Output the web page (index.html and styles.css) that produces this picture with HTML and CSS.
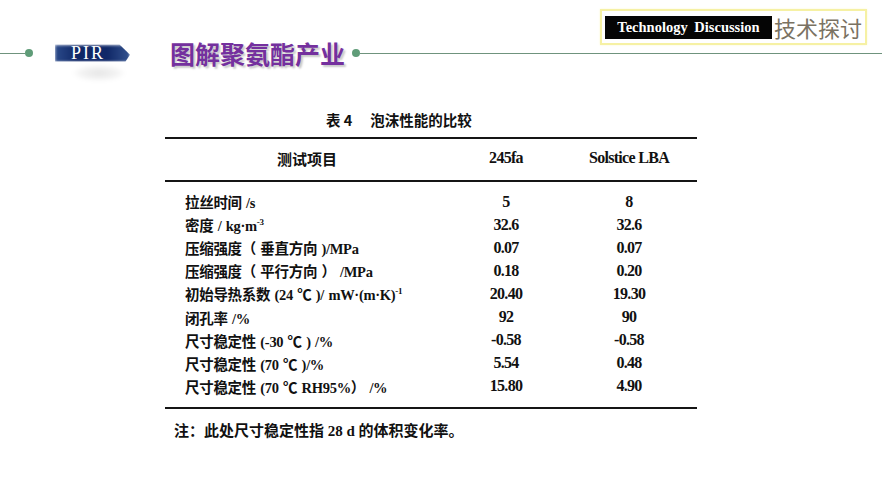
FILE: index.html
```html
<!DOCTYPE html>
<html lang="zh">
<head>
<meta charset="utf-8">
<title>图解聚氨酯产业</title>
<link rel="stylesheet" href="styles.css">
</head>
<body>
<div class="page">
  <div class="topbar">
    <div class="tag">
      <div class="tag-en">Technology Discussion</div>
      <div class="tag-cn">技术探讨</div>
    </div>
  </div>
  <div class="headrow">
    <div class="line short"></div>
    <div class="dot"></div>
    <div class="badge"><span class="badge-text">PIR</span></div>
    <div class="title">图解聚氨酯产业</div>
    <div class="dot"></div>
    <div class="line grow"></div>
  </div>

  <div class="figure">
    <div class="caption">表 4<span class="cap-gap">泡沫性能的比较</span></div>
    <div class="thead">
      <div class="cell head-label">测试项目</div>
      <div class="cell num head-num">245fa</div>
      <div class="cell num head-num">Solstice LBA</div>
      <div></div>
    </div>
    <div class="tbody">
      <div class="cell label">拉丝时间 /s</div><div class="cell num">5</div><div class="cell num">8</div><div></div>
      <div class="cell label">密度 / kg·m<sup>-3</sup></div><div class="cell num">32.6</div><div class="cell num">32.6</div><div></div>
      <div class="cell label">压缩强度（ 垂直方向 )/MPa</div><div class="cell num">0.07</div><div class="cell num">0.07</div><div></div>
      <div class="cell label">压缩强度（ 平行方向 ） /MPa</div><div class="cell num">0.18</div><div class="cell num">0.20</div><div></div>
      <div class="cell label">初始导热系数 (24 ℃ )/ mW·(m·K)<sup>-1</sup></div><div class="cell num">20.40</div><div class="cell num">19.30</div><div></div>
      <div class="cell label">闭孔率 /%</div><div class="cell num">92</div><div class="cell num">90</div><div></div>
      <div class="cell label">尺寸稳定性 (-30 ℃ ) /%</div><div class="cell num">-0.58</div><div class="cell num">-0.58</div><div></div>
      <div class="cell label">尺寸稳定性 (70 ℃ )/%</div><div class="cell num">5.54</div><div class="cell num">0.48</div><div></div>
      <div class="cell label">尺寸稳定性 (70 ℃ RH95%） /%</div><div class="cell num">15.80</div><div class="cell num">4.90</div><div></div>
    </div>
    <div class="note">注：此处尺寸稳定性指 28 d 的体积变化率。</div>
  </div>
</div>
</body>
</html>
```

FILE: styles.css
```css
html, body {
  margin: 0;
  padding: 0;
  background: #ffffff;
}

.page {
  width: 882px;
  height: 495px;
  overflow: hidden;
  position: relative;
  background: #ffffff;
}

/* top right tag */
.topbar {
  display: flex;
  justify-content: flex-end;
  padding: 9px 15px 0 0;
  margin-bottom: -7px;
}

.tag {
  display: flex;
  align-items: center;
  gap: 2px;
  height: 28px;
  padding: 2px 3px 2px 3px;
  border: 2px solid #f6f1a4;
  box-shadow: 0 0 2px #fbf8cf;
  background: #ffffff;
}

.tag-en {
  width: 167px;
  height: 23px;
  background: #050505;
  color: #ffffff;
  font-family: "Liberation Serif", serif;
  font-weight: bold;
  font-size: 14.5px;
  word-spacing: 3px;
  display: flex;
  align-items: center;
  justify-content: center;
}

.tag-cn {
  font-family: "Noto Sans CJK SC", sans-serif;
  font-size: 22px;
  line-height: 28px;
  color: #7a7262;
}

/* header row with line */
.headrow {
  display: flex;
  align-items: center;
  height: 30px;
}

.line {
  height: 1px;
  background: #6f937d;
}

.line.short {
  width: 25px;
}

.line.grow {
  flex: 1;
}

.dot {
  width: 8px;
  height: 8px;
  border-radius: 50%;
  background: #5f9c78;
  flex: none;
}

.badge {
  position: relative;
  width: 75px;
  height: 17px;
  margin-left: 22px;
  display: flex;
  align-items: center;
}

.badge::before {
  content: "";
  position: absolute;
  left: 0;
  top: 0;
  width: 75px;
  height: 17px;
  background: linear-gradient(90deg, #2b4a8a 0%, #0f2766 30%, #102868 70%, #34538f 100%);
  clip-path: polygon(0 0, 86% 0, 100% 60%, 94% 100%, 0 100%);
  filter: blur(1.8px);
}

.badge::after {
  content: "";
  position: absolute;
  left: 18px;
  top: 20px;
  width: 52px;
  height: 16px;
  border-radius: 50%;
  background: radial-gradient(ellipse at center, rgba(0,0,0,0.10) 0%, rgba(0,0,0,0.04) 55%, rgba(0,0,0,0) 75%);
  filter: blur(2px);
}

.badge-text {
  position: relative;
  z-index: 1;
  margin-left: 16px;
  color: #ffffff;
  font-family: "Liberation Serif", serif;
  font-size: 18px;
  letter-spacing: 2px;
  line-height: 17px;
}

.title {
  margin-left: 40px;
  margin-right: 7px;
  font-family: "Noto Sans CJK SC", sans-serif;
  font-weight: bold;
  font-size: 25px;
  line-height: 30px;
  color: #74309e;
  text-shadow: 2px 2px 2px rgba(0, 0, 0, 0.22);
}

/* table */
.figure {
  width: 532px;
  margin: 42px 0 0 165px;
  color: #111111;
  font-family: "Liberation Serif", "Noto Sans CJK SC", serif;
  font-weight: bold;
}

.caption {
  padding-left: 161px;
  font-family: "Noto Sans CJK SC", sans-serif;
  font-size: 14.5px;
  line-height: 20px;
  margin-bottom: 7px;
}

.cap-gap {
  margin-left: 18px;
}

.thead {
  display: grid;
  grid-template-columns: 280px 122px 124px 6px;
  align-items: center;
  height: 41px;
  border-top: 2px solid #151515;
  border-bottom: 2px solid #151515;
}

.head-label {
  text-align: center;
  font-family: "Noto Sans CJK SC", sans-serif;
  font-size: 15px;
  padding-left: 4px;
  padding-bottom: 3px;
}

.head-num {
  font-size: 17.5px;
  letter-spacing: -0.6px;
  padding-bottom: 3px;
}

.tbody {
  display: grid;
  grid-template-columns: 280px 122px 124px 6px;
  grid-auto-rows: 23.1px;
  align-items: center;
  padding: 8px 0 9px 0;
  border-bottom: 2px solid #151515;
}

.cell {
  white-space: nowrap;
}

.num {
  text-align: center;
  font-size: 16px;
  letter-spacing: -0.7px;
}

.label {
  padding-left: 20px;
  font-size: 14.5px;
  letter-spacing: -0.3px;
  word-spacing: 1px;
}

sup {
  font-size: 9px;
  line-height: 0;
  vertical-align: 6px;
}

.note {
  margin-top: 12px;
  padding-left: 9px;
  font-size: 15px;
  line-height: 20px;
}
```
